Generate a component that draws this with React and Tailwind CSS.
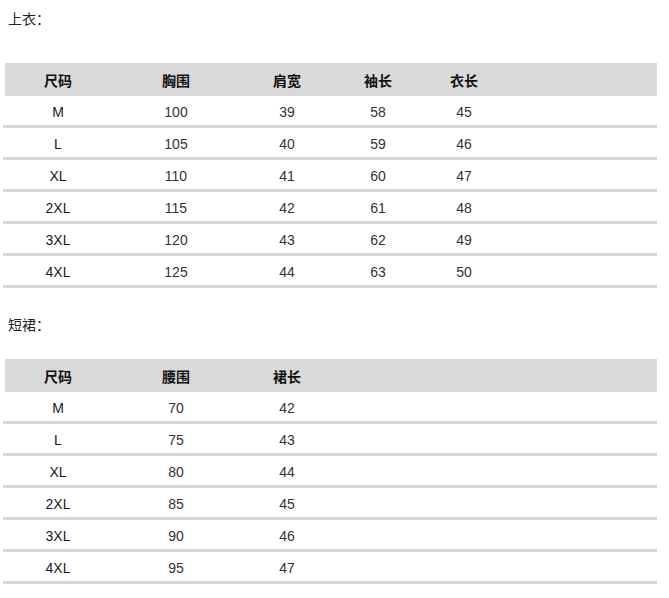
import React from 'react';

const COL_WIDTHS = ['w-[106px]', 'w-[130px]', 'w-[92px]', 'w-[90px]', 'w-[82px]'];

const tops = {
  headers: ['尺码', '胸围', '肩宽', '袖长', '衣长'],
  rows: [
    ['M', '100', '39', '58', '45'],
    ['L', '105', '40', '59', '46'],
    ['XL', '110', '41', '60', '47'],
    ['2XL', '115', '42', '61', '48'],
    ['3XL', '120', '43', '62', '49'],
    ['4XL', '125', '44', '63', '50'],
  ],
};

const skirts = {
  headers: ['尺码', '腰围', '裙长'],
  rows: [
    ['M', '70', '42'],
    ['L', '75', '43'],
    ['XL', '80', '44'],
    ['2XL', '85', '45'],
    ['3XL', '90', '46'],
    ['4XL', '95', '47'],
  ],
};

const cjk = { fontFamily: '"Noto Sans CJK SC", "Liberation Sans", sans-serif' };
const latin = { fontFamily: '"Liberation Sans", Arial, sans-serif' };

function SizeTable({ data }) {
  return (
    <div className="w-[654px] ml-[3px]">
      <div className="flex h-[33px] items-center bg-[#d9d9d9] ml-[2px] w-[652px]">
        {data.headers.map((h, i) => (
          <div
            key={h}
            className={`${COL_WIDTHS[i]} text-center text-[14px] font-bold text-[#111] leading-none`}
            style={cjk}
          >
            {h}
          </div>
        ))}
      </div>
      {data.rows.map((row) => (
        <div key={row[0]} className="flex h-[32px] items-center border-b-[3px] border-[#d6d6d6] pl-[2px] pt-[3px]">
          {row.map((cell, i) => (
            <div
              key={i}
              className={`${COL_WIDTHS[i]} text-center text-[14px] leading-none ${
                i === 0 ? 'text-[#1a1a1a]' : 'text-[#333] font-light'
              }`}
              style={latin}
            >
              {cell}
            </div>
          ))}
        </div>
      ))}
    </div>
  );
}

export default function App() {
  return (
    <div className="w-[669px] h-[598px] bg-white overflow-hidden">
      <div className="pt-[8px] pl-[8px] text-[14px] leading-[20px] text-[#222]" style={cjk}>
        上衣：
      </div>
      <div className="mt-[35px]">
        <SizeTable data={tops} />
      </div>
      <div className="mt-[26px] pl-[8px] text-[14px] leading-[20px] text-[#222]" style={cjk}>
        短裙：
      </div>
      <div className="mt-[25px]">
        <SizeTable data={skirts} />
      </div>
    </div>
  );
}
